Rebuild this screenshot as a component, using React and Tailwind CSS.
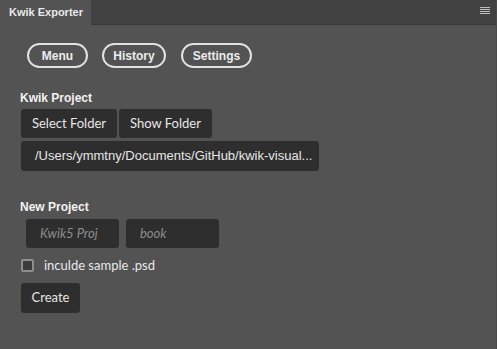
export default function App() {
  const pill =
    "h-[25px] rounded-full border-2 border-[#e2e2e2] text-[#ececec] font-bold text-[12px] flex items-center justify-center";
  const btn =
    "h-[29px] rounded-[3px] bg-[#2e2e2e] text-[#e6e6e6] text-[13px] flex items-center justify-center";
  return (
    <div
      className="w-[497px] h-[349px] bg-[#535353] flex flex-col overflow-hidden border-r border-[#4a4a4a]"
      style={{ fontFamily: "'Liberation Sans', Arial, sans-serif" }}
    >
      <div className="h-[25px] flex bg-[#424242]">
        <div className="w-[91px] h-[25px] bg-[#535353] flex items-center pl-[9px] pb-[1px] text-[11px] font-bold text-[#e8e8e8]">
          Kwik Exporter
        </div>
        <div className="flex-1 border-b border-[#383838] flex justify-end pt-[7px] pr-[6px]">
          <div className="w-[10px] flex flex-col gap-[1px]">
            <div className="h-[1px] bg-[#bdbdbd]" />
            <div className="h-[1px] bg-[#bdbdbd]" />
            <div className="h-[1px] bg-[#bdbdbd]" />
            <div className="h-[1px] bg-[#bdbdbd]" />
          </div>
        </div>
      </div>
      <div className="flex flex-col pl-[20px]">
        <div className="flex mt-[18px] ml-[7px] gap-[14px]">
          <div className={pill + " w-[61px]"}>Menu</div>
          <div className={pill + " w-[64px]"}>History</div>
          <div className={pill + " w-[71px] ml-[1px]"}>Settings</div>
        </div>
        <div className="mt-[22px] text-[12px] font-bold text-[#f2f2f2] leading-[16px]">
          Kwik Project
        </div>
        <div
          className="flex gap-[2px] mt-[3px] ml-[1px]"
          style={{ fontFamily: "Lato, sans-serif" }}
        >
          <div className={btn + " w-[96px]"}>Select Folder</div>
          <div className={btn + " w-[93px]"}>Show Folder</div>
        </div>
        <div className="mt-[3px] ml-[1px] w-[298px] h-[30px] rounded-[3px] bg-[#2e2e2e] text-[#e6e6e6] text-[13px] flex items-center pl-[14px]">
          /Users/ymmtny/Documents/GitHub/kwik-visual...
        </div>
        <div className="mt-[28px] text-[12px] font-bold text-[#f2f2f2] leading-[16px]">
          New Project
        </div>
        <div
          className="flex gap-[7px] mt-[4px] ml-[6px]"
          style={{ fontFamily: "Lato, sans-serif" }}
        >
          <div className="w-[93px] h-[29px] rounded-[3px] bg-[#2e2e2e] text-[#8c8c8c] italic text-[13px] flex items-center pl-[14px]">
            Kwik5 Proj
          </div>
          <div className="w-[93px] h-[29px] rounded-[3px] bg-[#2e2e2e] text-[#8c8c8c] italic text-[13px] flex items-center pl-[14px]">
            book
          </div>
        </div>
        <div
          className="flex items-center mt-[11px] ml-[1px] h-[13px]"
          style={{ fontFamily: "Lato, sans-serif" }}
        >
          <div className="w-[13px] h-[13px] rounded-[2px] border-2 border-[#8e8e8e] bg-[#3c3c3c]" />
          <div className="ml-[10px] text-[13px] text-[#e8e8e8]">inculde sample .psd</div>
        </div>
        <div
          className={btn + " w-[59px] h-[30px] mt-[11px] ml-[1px]"}
          style={{ fontFamily: "Lato, sans-serif" }}
        >
          Create
        </div>
      </div>
    </div>
  );
}
